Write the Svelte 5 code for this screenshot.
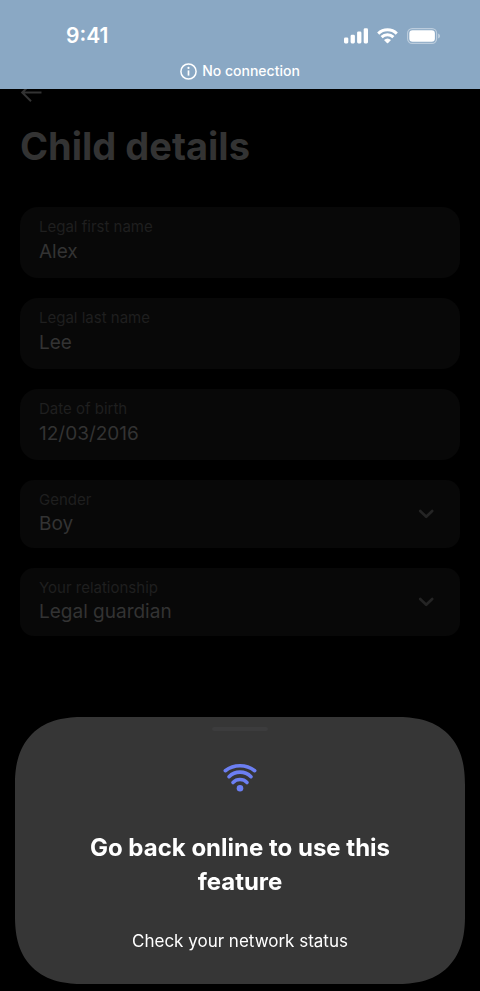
<script>
  let details = $state({
    firstName: 'Alex',
    lastName: 'Lee',
    birthDate: '12/03/2016',
    gender: 'Boy',
    relationship: 'Legal guardian'
  });

  const textFields = [
    { key: 'firstName', label: 'Legal first name' },
    { key: 'lastName', label: 'Legal last name' },
    { key: 'birthDate', label: 'Date of birth' }
  ];

  const selectFields = [
    { key: 'gender', label: 'Gender', options: ['Boy', 'Girl'] },
    { key: 'relationship', label: 'Your relationship', options: ['Legal guardian', 'Parent'] }
  ];
</script>

<div class="screen">
  <header>
    <div class="status">
      <span class="time">9:41</span>
      <div class="indicators">
        <svg width="24" height="16" viewBox="0 0 24 16" fill="#fff" aria-hidden="true">
          <rect x="0" y="9.4" width="4.3" height="6" rx="1.3" />
          <rect x="6.6" y="6.8" width="4.3" height="8.6" rx="1.3" />
          <rect x="13.1" y="3.4" width="4.3" height="12" rx="1.3" />
          <rect x="19.7" y="0.2" width="4.3" height="15.2" rx="1.3" />
        </svg>
        <svg width="21" height="16" viewBox="0 0 21 16" aria-hidden="true">
          <g fill="none" stroke="#fff" stroke-width="3">
            <path d="M1.2 5.6A13.4 13.4 0 0 1 19.8 5.6" />
            <path d="M4.6 9.1A8.5 8.5 0 0 1 16.4 9.1" />
          </g>
          <path d="M7 12.1Q10.5 9.1 14 12.1L11.1 15Q10.5 15.6 9.9 15Z" fill="#fff" />
        </svg>
        <svg width="33" height="16" viewBox="0 0 33 16" aria-hidden="true">
          <rect x="0.6" y="0.6" width="29" height="14.8" rx="4.6" fill="none" stroke="#fff" stroke-opacity=".42" stroke-width="1.2" />
          <rect x="2.3" y="2.3" width="25.6" height="11.4" rx="3.2" fill="#fff" />
          <path d="M31.2 5.4Q33 6.2 33 8T31.2 10.6Z" fill="#fff" fill-opacity=".48" />
        </svg>
      </div>
    </div>
    <div class="notice" role="status">
      <svg width="17" height="17" viewBox="0 0 17 17" fill="none" stroke="#fff" aria-hidden="true">
        <circle cx="8.5" cy="8.5" r="7.6" stroke-width="1.5" />
        <path d="M8.5 7.4V12.6" stroke-width="1.7" />
        <circle cx="8.5" cy="4.9" r="1.1" fill="#fff" stroke="none" />
      </svg>
      <span>No connection</span>
    </div>
  </header>

  <main>
    <button class="back" type="button" aria-label="Back">
      <svg width="24" height="24" viewBox="0 0 24 24" fill="none" stroke="#333" stroke-width="2" aria-hidden="true">
        <path d="M21.5 12.5H2.5M11 3.7L2.2 12.5L11 21.3" />
      </svg>
    </button>
    <h1>Child details</h1>
    <form>
      {#each textFields as field}
        <div class="field">
          <label for={field.key}>{field.label}</label>
          <input id={field.key} type="text" bind:value={details[field.key]} />
        </div>
      {/each}
      {#each selectFields as field}
        <div class="field choice">
          <div class="stack">
            <label for={field.key}>{field.label}</label>
            <select id={field.key} bind:value={details[field.key]}>
              {#each field.options as option}
                <option>{option}</option>
              {/each}
            </select>
          </div>
          <svg width="16" height="10" viewBox="0 0 16 10" fill="none" stroke="#242424" stroke-width="2.6" stroke-linecap="round" stroke-linejoin="round" aria-hidden="true">
            <path d="M2.2 2L8.2 7.8L14.2 2" />
          </svg>
        </div>
      {/each}
    </form>
  </main>

  <section class="sheet" role="dialog" aria-labelledby="offline-title">
    <div class="handle"></div>
    <svg class="wifi" width="34" height="30" viewBox="0 0 34 30" fill="none" stroke="#6c7ff2" stroke-width="3.6" stroke-linecap="round" aria-hidden="true">
      <path d="M2.3 7.7A24.1 24.1 0 0 1 31.7 7.7" />
      <path d="M6 13.7A15.6 15.6 0 0 1 28 13.7" />
      <path d="M10 19.5A9.8 9.8 0 0 1 24 19.5" />
      <circle cx="17" cy="25.3" r="3.3" fill="#6c7ff2" stroke="none" />
    </svg>
    <h2 id="offline-title">Go back online to use this feature</h2>
    <p>Check your network status</p>
  </section>
</div>

<style>
  :global(body) {
    margin: 0;
    background: #000;
  }

  .screen {
    min-height: 100vh;
    background: #000;
    color: #fff;
    font-family: Inter, 'Liberation Sans', sans-serif;
  }

  header {
    position: relative;
    z-index: 1;
    box-sizing: border-box;
    padding: 24px 40px 8px 66px;
    background: #8aa8c4;
  }

  .status {
    display: flex;
    align-items: center;
    justify-content: space-between;
    height: 24px;
  }

  .time {
    font-size: 21px;
    font-weight: 600;
    line-height: 24px;
  }

  .indicators {
    display: flex;
    align-items: center;
    gap: 9px;
  }

  .notice {
    display: flex;
    align-items: center;
    justify-content: center;
    gap: 5px;
    margin: 13px -40px 0 -66px;
    font-size: 14px;
    font-weight: 500;
    line-height: 20px;
  }

  main {
    margin-top: -9px;
    padding: 0 20px;
  }

  button,
  input,
  select {
    margin: 0;
    padding: 0;
    border: 0;
    background: none;
    font-family: inherit;
  }

  .back {
    display: block;
    height: 24px;
  }

  .back svg {
    display: block;
  }

  h1 {
    margin: 18px 0 0;
    color: #333;
    font-size: 38px;
    font-weight: 700;
    line-height: 48px;
  }

  form {
    display: flex;
    flex-direction: column;
    gap: 20px;
    margin-top: 37px;
  }

  .field {
    display: flex;
    flex-direction: column;
    padding: 10px 19px 11px;
    border-radius: 18px;
    background: #080808;
  }

  .choice {
    flex-direction: row;
    align-items: center;
    padding: 10px 26px 10px 19px;
    border-radius: 14px;
  }

  .stack {
    display: flex;
    flex: 1;
    flex-direction: column;
  }

  label {
    color: #1f1f1f;
    font-size: 15px;
    line-height: 20px;
  }

  input,
  select {
    width: 100%;
    height: 30px;
    color: #333;
    font-size: 19px;
    line-height: 30px;
    appearance: none;
  }

  select {
    height: 28px;
    line-height: 28px;
  }

  .sheet {
    position: fixed;
    right: 15px;
    bottom: 7px;
    left: 15px;
    z-index: 2;
    display: flex;
    flex-direction: column;
    align-items: center;
    box-sizing: border-box;
    padding: 10px 60px 30px;
    border-radius: 58px;
    background: #363636;
    text-align: center;
  }

  @supports (corner-shape: superellipse(1.27)) {
    .sheet {
      border-radius: 68px;
      corner-shape: superellipse(1.27);
    }
  }

  .handle {
    width: 56px;
    height: 4px;
    border-radius: 2px;
    background: #3c3c3d;
  }

  .wifi {
    margin-top: 32px;
  }

  h2 {
    margin: 38px 0 0;
    font-size: 24px;
    font-weight: 700;
    line-height: 34px;
  }

  p {
    margin: 30px 0 0;
    font-size: 17px;
    line-height: 25px;
  }
</style>
